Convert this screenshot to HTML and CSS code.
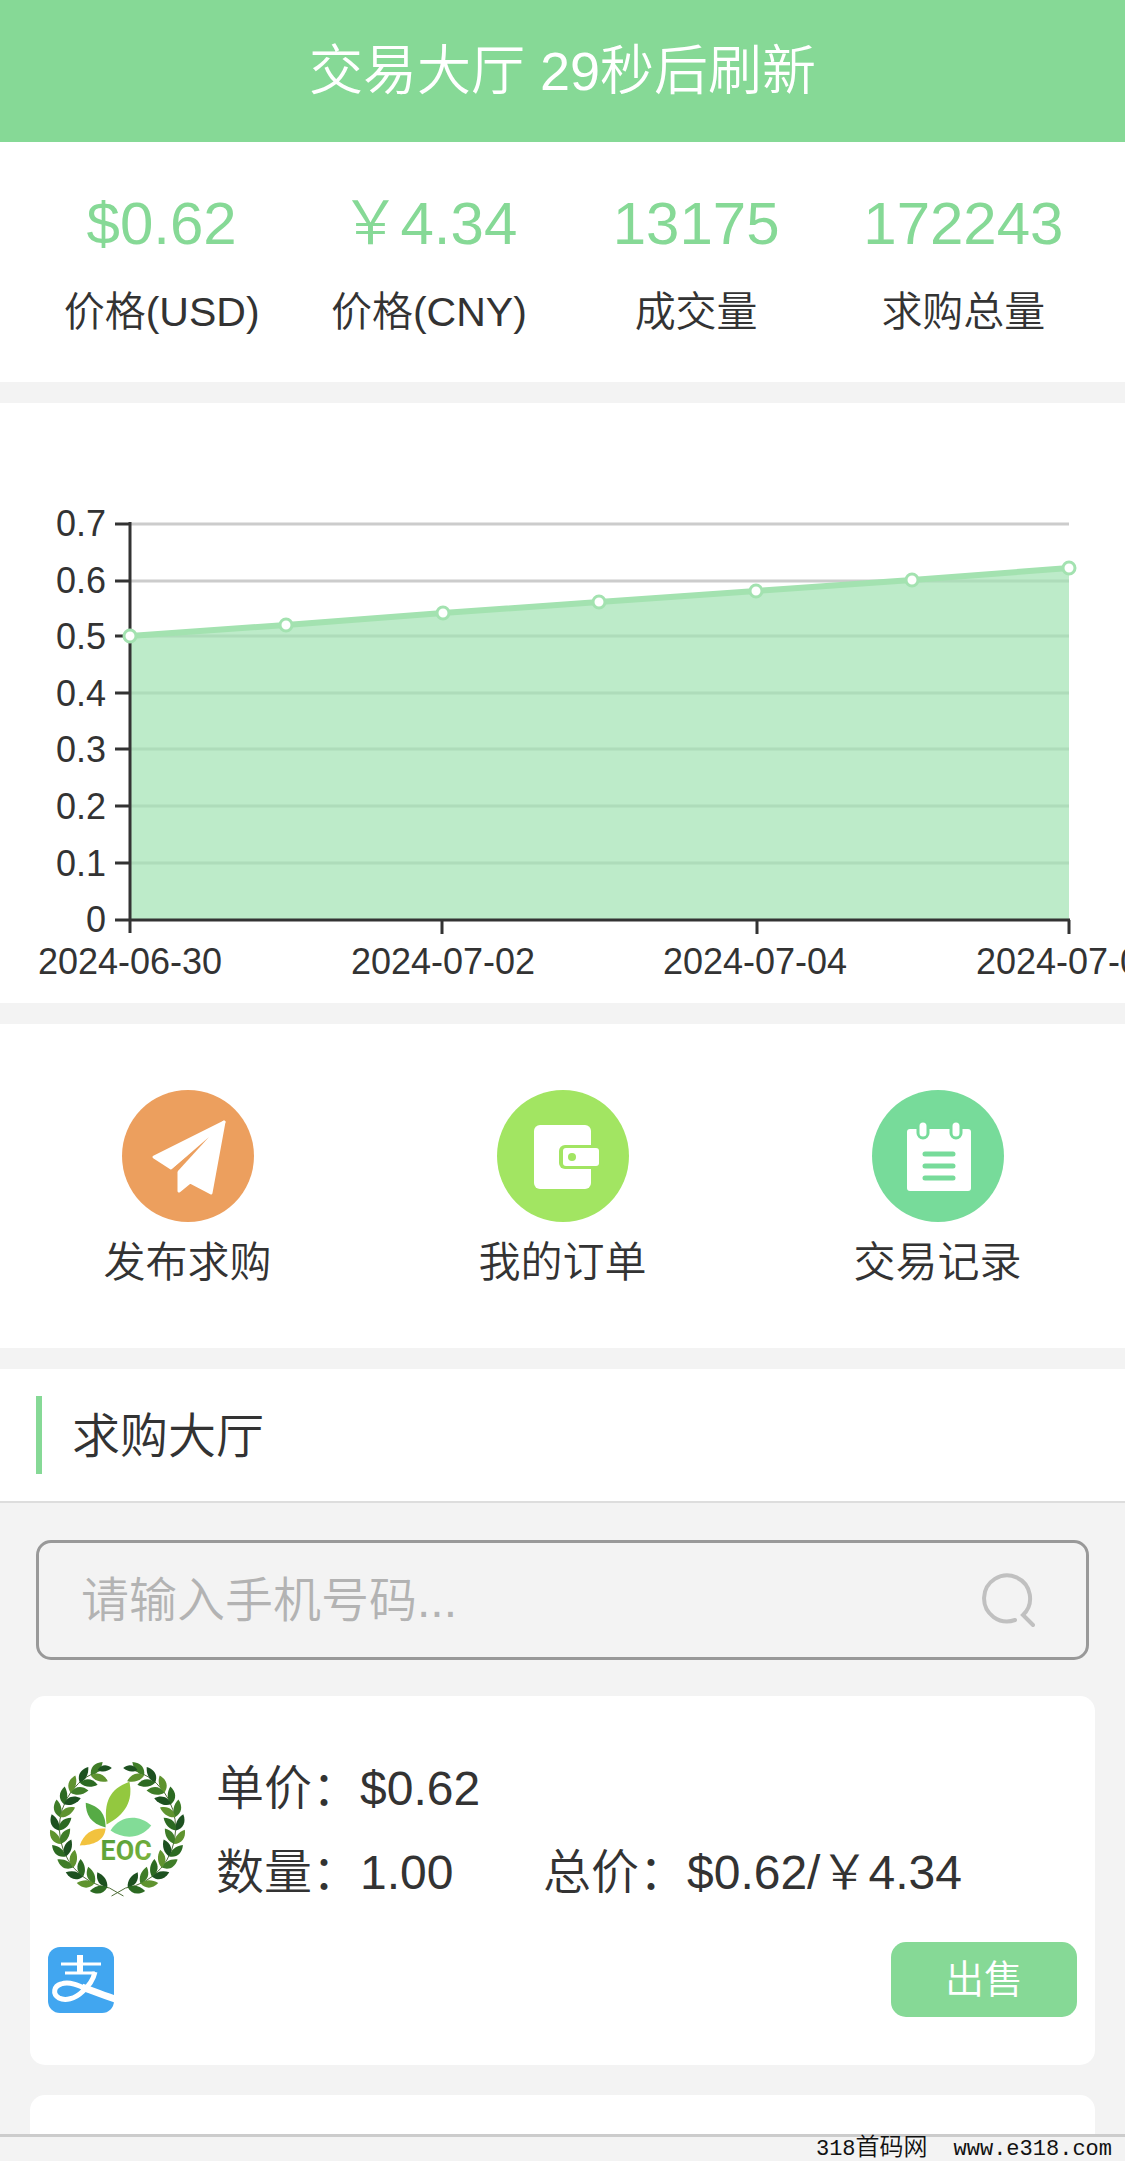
FILE: index.html
```
<!DOCTYPE html>
<html lang="zh-CN">
<head>
    <meta charset="UTF-8">
    <meta name="viewport" content="width=device-width, initial-scale=1.0">
    <title>交易大厅</title>
    <link rel="stylesheet" href="styles.css">
</head>
<body>

    <header class="header">
        <h1>交易大厅 29秒后刷新</h1>
    </header>

    <!-- Price stats -->
    <section class="section stats">
        <div class="stat">
            <div class="stat-value">$0.62</div>
            <div class="stat-label">价格(USD)</div>
        </div>
        <div class="stat">
            <div class="stat-value">￥4.34</div>
            <div class="stat-label">价格(CNY)</div>
        </div>
        <div class="stat">
            <div class="stat-value">13175</div>
            <div class="stat-label">成交量</div>
        </div>
        <div class="stat">
            <div class="stat-value">172243</div>
            <div class="stat-label">求购总量</div>
        </div>
    </section>

    <!-- Price chart -->
    <section class="section">
        <svg class="chart" viewBox="0 0 1125 600" role="img" aria-label="价格走势">
            <g class="grid-lines">
                <path d="M130 121H1069M130 178H1069M130 233H1069M130 290H1069M130 346H1069M130 403H1069M130 460H1069"/>
            </g>
            <path class="area" d="M131 233L286 222L443 210L599 199L756 188L912 177L1069 165V517H131Z"/>
            <g class="axis">
                <path d="M130 119V530M115 121H130M115 178H130M115 233H130M115 290H130M115 346H130M115 403H130M115 460H130M115 517H1070M442 517V531M757 517V531M1069 517V531"/>
            </g>
            <polyline class="line" points="130,233 286,222 443,210 599,199 756,188 912,177 1069,165"/>
            <g class="points">
                <circle cx="130" cy="233" r="6"/>
                <circle cx="286" cy="222" r="6"/>
                <circle cx="443" cy="210" r="6"/>
                <circle cx="599" cy="199" r="6"/>
                <circle cx="756" cy="188" r="6"/>
                <circle cx="912" cy="177" r="6"/>
                <circle cx="1069" cy="165" r="6"/>
            </g>
            <g class="y-labels">
                <text x="106" y="133">0.7</text>
                <text x="106" y="190">0.6</text>
                <text x="106" y="246">0.5</text>
                <text x="106" y="303">0.4</text>
                <text x="106" y="359">0.3</text>
                <text x="106" y="416">0.2</text>
                <text x="106" y="473">0.1</text>
                <text x="106" y="529">0</text>
            </g>
            <g class="x-labels">
                <text x="130" y="571">2024-06-30</text>
                <text x="443" y="571">2024-07-02</text>
                <text x="755" y="571">2024-07-04</text>
                <text x="1068" y="571">2024-07-06</text>
            </g>
        </svg>
    </section>

    <!-- Shortcuts -->
    <nav class="section actions">
        <a class="action" href="#publish">
            <svg class="action-icon" viewBox="0 0 132 132">
                <circle cx="66" cy="66" r="66" fill="#ec9f5e"/>
                <g fill="#fff" stroke="#fff" stroke-width="3" stroke-linejoin="round">
                    <path d="M102 32L32 67L49 78L86 47Z"/>
                    <path d="M102 32L89 103L68 92L57 101V81L92 42Z"/>
                </g>
                <path d="M87 47L55 82L49 80Z" fill="#ec9f5e"/>
            </svg>
            <span>发布求购</span>
        </a>
        <a class="action" href="#orders">
            <svg class="action-icon" viewBox="0 0 132 132">
                <circle cx="66" cy="66" r="66" fill="#a2e562"/>
                <rect x="37" y="35" width="57" height="64" rx="6" fill="#fff"/>
                <rect x="62" y="55" width="46" height="24" rx="6" fill="#a2e562"/>
                <rect x="66" y="58" width="36" height="18" rx="3" fill="#fff"/>
                <circle cx="75" cy="67" r="4" fill="#a2e562"/>
            </svg>
            <span>我的订单</span>
        </a>
        <a class="action" href="#records">
            <svg class="action-icon" viewBox="0 0 132 132">
                <circle cx="66" cy="66" r="66" fill="#77db9a"/>
                <rect x="35" y="39" width="64" height="62" rx="3" fill="#fff"/>
                <g fill="#fff" stroke="#77db9a" stroke-width="3">
                    <rect x="46" y="31" width="10" height="17" rx="5"/>
                    <rect x="79" y="31" width="10" height="17" rx="5"/>
                </g>
                <path d="M53 64H81M53 76H81M53 88H81" stroke="#77db9a" stroke-width="5" stroke-linecap="round"/>
            </svg>
            <span>交易记录</span>
        </a>
    </nav>

    <div class="title-bar">
        <h2>求购大厅</h2>
    </div>

    <form class="search">
        <input type="search" name="phone" placeholder="请输入手机号码..." aria-label="手机号码">
        <button type="submit" aria-label="搜索">
            <svg viewBox="0 0 54 56">
                <path d="M34 48A23 23 0 1 1 42 43L52 53"/>
            </svg>
        </button>
    </form>

    <!-- Buy orders -->
    <main class="orders">
        <article class="order">
            <div class="order-top">
                <svg class="logo" viewBox="0 0 140 140" role="img" aria-label="EOC">
                    <defs>
                        <path id="leaf" d="M0 0C5 -6 12 -6 18 0C12 4 5 4 0 0Z"/>
                        <linearGradient id="eoc" x1="0" y1="0" x2="1" y2="1">
                            <stop offset="0" stop-color="#4f9a3a"/>
                            <stop offset="1" stop-color="#83b83c"/>
                        </linearGradient>
                    </defs>
                    <g id="wreath"></g>
                    <path d="M59 66C56 44 62 30 82 23C86 42 78 56 59 66Z" fill="#93c83f"/>
                    <path d="M58 69C43 65 38 56 38 44C53 48 58 56 58 69Z" fill="#56ab45"/>
                    <path d="M58 70C57 82 46 87 32 87C36 75 45 69 58 70Z" fill="#f2c23e"/>
                    <path d="M63 72C72 57 91 55 104 67C93 81 76 81 63 72Z" fill="#82dc97"/>
                    <text class="logo-text" x="53" y="102" fill="url(#eoc)">EOC</text>
                </svg>
                <div class="order-info">
                    <div class="order-row"><span>单价：$0.62</span></div>
                    <div class="order-row"><span>数量：1.00</span><span>总价：$0.62/￥4.34</span></div>
                </div>
            </div>
            <div class="order-bottom">
                <svg class="alipay" viewBox="0 0 66 66" role="img" aria-label="支付宝">
                    <rect width="66" height="66" rx="12" fill="#41a6f0"/>
                    <g fill="none" stroke="#fff">
                        <path d="M13 17H53M17 26H47" stroke-width="3"/>
                        <path d="M32 8V26" stroke-width="6"/>
                        <path d="M47 25C45 34 40 40 34 45C27 52 17 54 11 51C4 47 6 39 13 37C22 34 32 39 41 43" stroke-width="5"/>
                        <path d="M34 40C45 44 55 48 67 52" stroke-width="7"/>
                    </g>
                </svg>
                <button class="sell-btn" type="button">出售</button>
            </div>
        </article>
        <article class="order order-next"></article>
    </main>

    <footer class="footer">
        <span>318<b>首码网</b></span>
        <span>www.e318.com</span>
    </footer>

    <script>
        // Draw the two laurel branches leaf by leaf
        const wreath = document.querySelector('#wreath');
        const colors = ['#2c6a22', '#5f932f', '#1d5120', '#3f7d28'];

        function branch() {
            let html = '<path d="M76 138L62 130A59 61 0 0 1 58 10" fill="none" stroke="#4d6b35" stroke-width="1"/>';
            for (let i = 0; i < 12; i++) {
                const deg = 10 + i * 13;
                const t = deg * Math.PI / 180;
                const x = 70 - 59 * Math.sin(t);
                const y = 70 + 60 * Math.cos(t);
                html += `<use href="#leaf" fill="${colors[i % 4]}" transform="translate(${x} ${y}) rotate(${158 + deg})"/>`;
                html += `<use href="#leaf" fill="${colors[(i + 2) % 4]}" transform="translate(${x} ${y}) rotate(${226 + deg})"/>`;
            }
            // leaf at the tip of the branch
            return html + '<use href="#leaf" fill="#1d5120" transform="translate(50 11) rotate(-8) scale(.8)"/>';
        }

        wreath.innerHTML = `<g>${branch()}</g><g transform="translate(140 0) scale(-1 1)">${branch()}</g>`;
    </script>

</body>
</html>
```
FILE: styles.css
```
* {
    box-sizing: border-box;
}

body {
    margin: 0;
    min-height: 100vh;
    display: flex;
    flex-direction: column;
    font-family: "Liberation Sans", "Noto Sans CJK SC", sans-serif;
    font-size: 42px;
    font-weight: 350;
    line-height: 60px;
    color: #333;
    background-color: #f3f3f3;
}

h1, h2 {
    margin: 0;
    font-weight: 350;
}

.header {
    background-color: #86d996;
    color: #fff;
    text-align: center;
}

.header h1 {
    font-size: 54px;
    line-height: 142px;
}

.section {
    background-color: #fff;
    margin-bottom: 21px;
}

.stats {
    display: flex;
    padding: 46px 28px 40px;
}

.stat {
    flex: 1;
    text-align: center;
    white-space: nowrap;
}

.stat-value {
    font-size: 60px;
    line-height: 72px;
    margin-bottom: 22px;
    color: #86d996;
}

.stat-label {
    font-size: 41px;
}

/* Chart */
.chart {
    display: block;
    width: 100%;
    font-size: 36px;
}

.chart text {
    fill: #333;
}

.grid-lines {
    stroke: #ccc;
    stroke-width: 3;
}

.axis {
    fill: none;
    stroke: #333;
    stroke-width: 3;
}

.area {
    fill: #a1e2b2;
    fill-opacity: 0.7;
}

.line {
    fill: none;
    stroke: #a3e2b0;
    stroke-width: 6;
}

.points {
    fill: #fff;
    stroke: #a3e2b0;
    stroke-width: 3;
}

.y-labels {
    text-anchor: end;
}

.x-labels {
    text-anchor: middle;
}

/* Shortcuts */
.actions {
    display: flex;
    padding: 66px 0 55px;
}

.action {
    flex: 1;
    display: flex;
    flex-direction: column;
    align-items: center;
    gap: 11px;
    color: #333;
    text-decoration: none;
}

.action-icon {
    width: 132px;
    height: 132px;
}

.title-bar {
    padding: 27px 36px;
    background-color: #fff;
    border-bottom: 2px solid #ddd;
}

.title-bar h2 {
    padding: 4px 0 0 30px;
    border-left: 6px solid #86d996;
    font-size: 48px;
    line-height: 74px;
}

/* Search box */
.search {
    display: flex;
    align-items: center;
    height: 120px;
    margin: 37px 36px 36px;
    padding: 0 51px 0 42px;
    border: 3px solid #999;
    border-radius: 15px;
}

.search input {
    flex: 1;
    min-width: 0;
    padding: 2px 0 0;
    border: none;
    outline: none;
    background: none;
    font: inherit;
    font-size: 48px;
    line-height: 72px;
    color: #333;
}

.search input::placeholder {
    color: #b3b3b3;
}

.search button {
    padding: 0;
    border: none;
    background: none;
    cursor: pointer;
}

.search svg {
    display: block;
    width: 54px;
    height: 56px;
    fill: none;
    stroke: #c0c0c0;
    stroke-width: 4;
    stroke-linecap: round;
}

/* Order cards */
.orders {
    flex: 1;
    display: flex;
    flex-direction: column;
    gap: 30px;
    padding: 0 30px;
}

.order {
    padding: 51px 18px 48px;
    border-radius: 15px;
    background-color: #fff;
}

.order-next {
    flex: 1;
    padding: 0;
    border-radius: 15px 15px 0 0;
}

.order-top {
    display: flex;
    gap: 29px;
    margin-bottom: 27px;
}

.logo {
    width: 139px;
    height: 139px;
    margin-top: 12px;
}

.logo-text {
    font-family: Roboto, sans-serif;
    font-size: 27px;
    font-weight: 700;
}

.order-row {
    display: flex;
    font-size: 48px;
    line-height: 84px;
    white-space: nowrap;
}

.order-row span:first-child {
    min-width: 327px;
}

.order-bottom {
    display: flex;
    justify-content: space-between;
    align-items: center;
}

.alipay {
    width: 66px;
    height: 66px;
}

.sell-btn {
    width: 186px;
    height: 75px;
    padding: 0;
    border: none;
    border-radius: 15px;
    background-color: #86d996;
    color: #fff;
    font: inherit;
    font-size: 39px;
    cursor: pointer;
}

.footer {
    display: flex;
    justify-content: flex-end;
    gap: 26px;
    height: 27px;
    padding-right: 13px;
    border-top: 3px solid #ccc;
    font-family: "Liberation Mono", "Noto Sans CJK SC", monospace;
    font-size: 22px;
    line-height: 26px;
    color: #111;
}

.footer b {
    font-size: 24px;
    font-weight: 350;
    line-height: 24px;
}
```
